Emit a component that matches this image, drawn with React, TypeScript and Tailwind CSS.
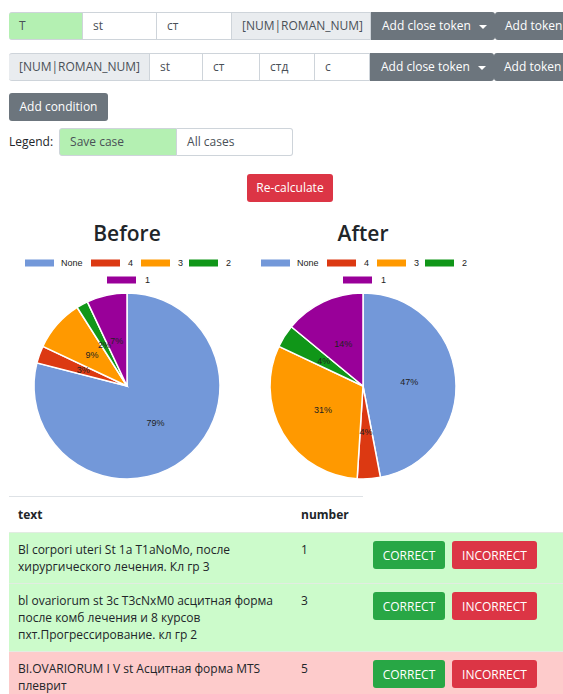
import React from 'react';

interface Slice {
  label: string;
  value: number;
  color: string;
}

const COLORS = {
  none: '#7398d9',
  four: '#dc3912',
  three: '#ff9900',
  two: '#109618',
  one: '#990099',
};

const BEFORE: Slice[] = [
  { label: 'None', value: 79, color: COLORS.none },
  { label: '4', value: 3, color: COLORS.four },
  { label: '3', value: 9, color: COLORS.three },
  { label: '2', value: 2, color: COLORS.two },
  { label: '1', value: 7, color: COLORS.one },
];

const AFTER: Slice[] = [
  { label: 'None', value: 47, color: COLORS.none },
  { label: '4', value: 4, color: COLORS.four },
  { label: '3', value: 31, color: COLORS.three },
  { label: '2', value: 4, color: COLORS.two },
  { label: '1', value: 14, color: COLORS.one },
];

const ROWS = [
  {
    text: 'Bl corpori uteri St 1a T1aNoMo, после хирургического лечения. Кл гр 3',
    number: 1,
    ok: true,
  },
  {
    text: 'bl ovariorum st 3c T3cNxM0 асцитная форма после комб лечения и 8 курсов пхт.Прогрессирование. кл гр 2',
    number: 3,
    ok: true,
  },
  {
    text: 'BI.OVARIORUM I V st Асцитная форма MTS плеврит',
    number: 5,
    ok: false,
  },
];

// legend layout: [rect x, text x, row]
const LEGEND_POS: [number, number, number][] = [
  [16, 52, 0],
  [82, 119, 0],
  [132, 169, 0],
  [180, 217, 0],
  [98, 136, 1],
];

const PieChart: React.FC<{ title: string; data: Slice[] }> = ({ title, data }) => {
  const cx = 118;
  const cy = 140;
  const r = 93;
  const total = data.reduce((s, d) => s + d.value, 0);

  const point = (deg: number, rad: number) => {
    const a = (deg * Math.PI) / 180;
    return [cx + rad * Math.sin(a), cy - rad * Math.cos(a)];
  };

  let start = 0;
  const slices = data.map((d) => {
    const sweep = (d.value / total) * 360;
    const end = start + sweep;
    const [x0, y0] = point(start, r);
    const [x1, y1] = point(end, r);
    const [lx, ly] = point(start + sweep / 2, r * 0.5);
    const path = `M ${cx} ${cy} L ${x0} ${y0} A ${r} ${r} 0 ${sweep > 180 ? 1 : 0} 1 ${x1} ${y1} Z`;
    start = end;
    return { ...d, path, lx, ly };
  });

  return (
    <div className="flex w-[236px] flex-col items-center">
      <div className="h-[25px] text-[21px] leading-[25px] font-semibold text-[#212529]">{title}</div>
      <svg width="236" height="242" viewBox="0 0 236 242" style={{ fontFamily: '"Liberation Sans", Arial, sans-serif' }}>
        {data.map((d, i) => {
          const [rx, tx, row] = LEGEND_POS[i];
          const y = 17 + row * 17;
          return (
            <g key={d.label}>
              <rect x={rx} y={y - 3.5} width="29" height="7" fill={d.color} />
              <text x={tx} y={y + 3.2} fontSize="9" fill="#222">
                {d.label}
              </text>
            </g>
          );
        })}
        {slices.map((s) => (
          <path key={s.label} d={s.path} fill={s.color} stroke="#fff" strokeWidth="1.5" />
        ))}
        {slices.map((s) => (
          <text key={s.label} x={s.lx} y={s.ly + 3} fontSize="9" fill="#222" textAnchor="middle">
            {s.value}%
          </text>
        ))}
      </svg>
    </div>
  );
};

const Cell: React.FC<{ w: string; children: React.ReactNode; cls?: string }> = ({ w, children, cls = '' }) => (
  <div className={`flex h-[28px] items-center border border-l-0 border-[#ced4da] px-[10px] text-[12px] text-[#495057] ${w} ${cls}`}>
    {children}
  </div>
);

const TokenButtons = () => (
  <>
    <div className="flex h-[28px] w-[124px] shrink-0 items-center gap-[8px] rounded-r-[3px] bg-[#6c757d] pl-[11px] text-[12px] text-white">
      Add close token
      <span className="mt-[1px] h-0 w-0 border-x-[4px] border-t-[4px] border-x-transparent border-t-white" />
    </div>
    <div className="flex h-[28px] w-[85px] shrink-0 items-center rounded-[3px] bg-[#6c757d] pl-[10px] text-[12px] text-white">
      Add token
    </div>
  </>
);

export default function App() {
  return (
    <div
      className="min-h-screen w-full overflow-hidden bg-white pt-[12px] pl-[9px] text-[#212529]"
      style={{ fontFamily: '"Open Sans", "Noto Sans", sans-serif' }}
    >
      <div className="flex w-[700px]">
        <Cell w="w-[74px]" cls="border-l rounded-l-[3px] bg-[#b4f0b2]">T</Cell>
        <Cell w="w-[74px]">st</Cell>
        <Cell w="w-[75px]">ст</Cell>
        <Cell w="w-[139px]" cls="bg-[#e9ecef]">[NUM|ROMAN_NUM]</Cell>
        <TokenButtons />
      </div>

      <div className="mt-[13px] flex w-[700px]">
        <Cell w="w-[141px]" cls="border-l rounded-l-[3px] bg-[#e9ecef]">[NUM|ROMAN_NUM]</Cell>
        <Cell w="w-[53px]">st</Cell>
        <Cell w="w-[57px]">ст</Cell>
        <Cell w="w-[55px]">стд</Cell>
        <Cell w="w-[55px]">с</Cell>
        <TokenButtons />
      </div>

      <button className="mt-[12px] flex h-[28px] w-[99px] items-center justify-center rounded-[3px] bg-[#6c757d] text-[12px] text-white">
        Add condition
      </button>

      <div className="mt-[7px] flex items-center">
        <span className="mr-[6px] text-[12px]">Legend:</span>
        <div className="flex h-[28px] w-[118px] items-center rounded-l-[3px] border border-[#ced4da] bg-[#b4f0b2] px-[10px] text-[12px] text-[#495057]">
          Save case
        </div>
        <div className="flex h-[28px] w-[116px] items-center rounded-r-[3px] border border-l-0 border-[#ced4da] px-[10px] text-[12px] text-[#495057]">
          All cases
        </div>
      </div>

      <button className="mt-[18px] ml-[238px] flex h-[28px] w-[86px] items-center justify-center rounded-[3px] bg-[#dc3545] text-[12px] text-white">
        Re-calculate
      </button>

      <div className="mt-[19px] flex">
        <PieChart title="Before" data={BEFORE} />
        <PieChart title="After" data={AFTER} />
      </div>

      <table className="mt-[8px] w-[640px] table-fixed border-collapse text-[12px] leading-[17px]">
        <colgroup>
          <col className="w-[283px]" />
          <col className="w-[71px]" />
          <col />
        </colgroup>
        <thead>
          <tr>
            <th className="border-t border-[#dee2e6] px-[9px] py-[9px] text-left font-bold">text</th>
            <th className="border-t border-[#dee2e6] px-[9px] py-[9px] text-left font-bold">number</th>
            <th />
          </tr>
        </thead>
        <tbody>
          {ROWS.map((row) => (
            <tr key={row.number} className={row.ok ? 'bg-[#ccfbcb]' : 'bg-[#fdcbcb]'}>
              <td className="border-t border-[#e2ece2] px-[9px] py-[8px] align-top">{row.text}</td>
              <td className="border-t border-[#e2ece2] px-[9px] py-[8px] align-top">{row.number}</td>
              <td className="border-t border-[#e2ece2] px-[10px] py-[8px] align-top">
                <div className="flex gap-[7px]">
                  <button className="flex h-[28px] w-[72px] items-center justify-center rounded-[3px] bg-[#28a745] text-[12px] text-white">
                    CORRECT
                  </button>
                  <button className="flex h-[28px] w-[85px] items-center justify-center rounded-[3px] bg-[#dc3545] text-[12px] text-white">
                    INCORRECT
                  </button>
                </div>
              </td>
            </tr>
          ))}
        </tbody>
      </table>
    </div>
  );
}
